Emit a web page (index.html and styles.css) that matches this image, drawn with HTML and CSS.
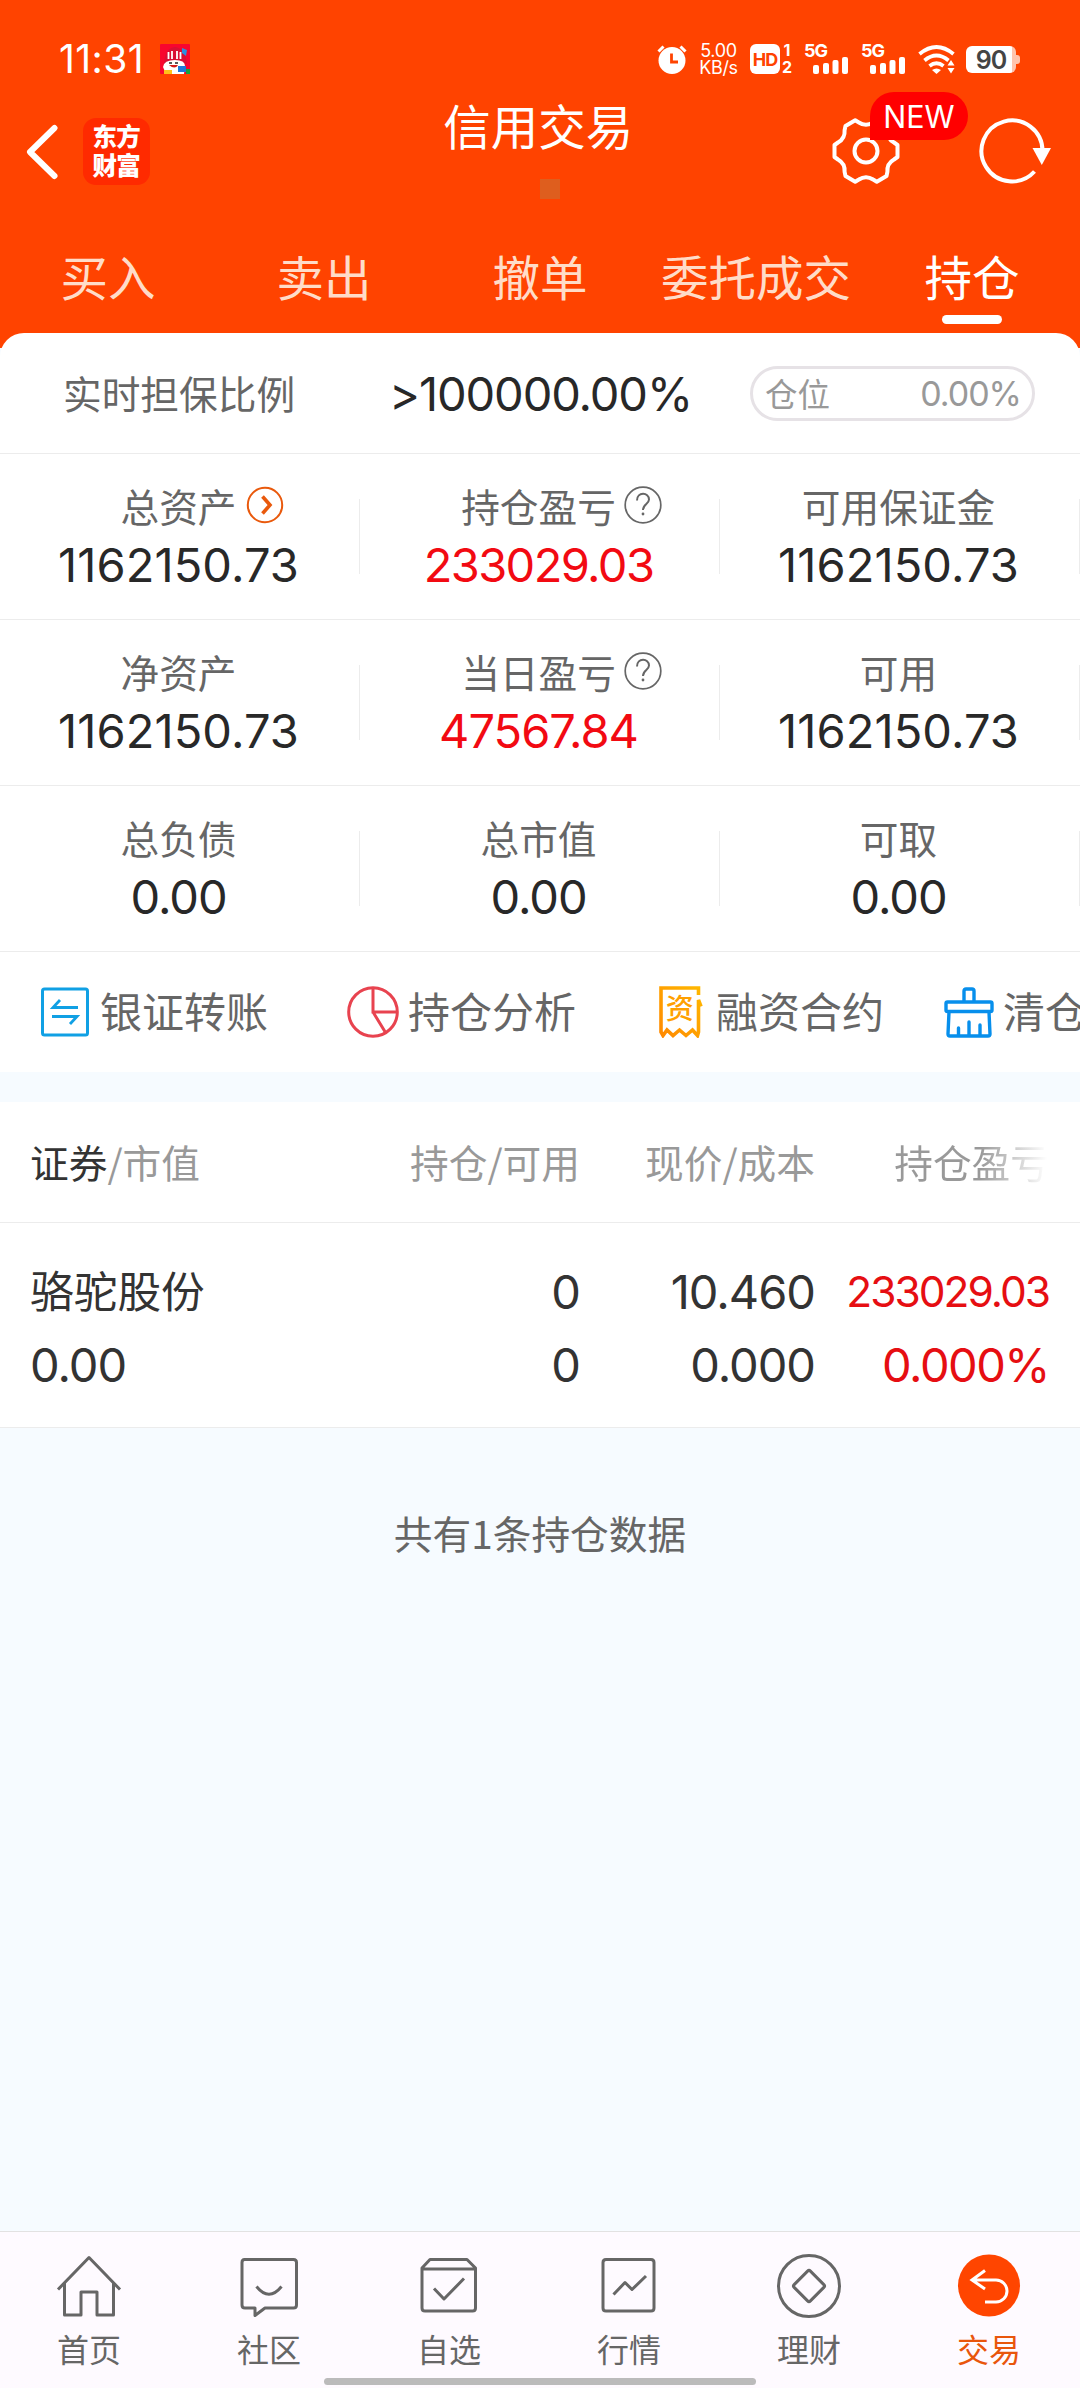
FILE: index.html
```html
<!DOCTYPE html>
<html lang="zh-CN">
<head>
<meta charset="utf-8">
<title>信用交易</title>
<link rel="stylesheet" href="styles.css">
</head>
<body>
<div class="app">
  <header class="header">
    <div class="status">
      <span class="clock num">11:31</span>
      <svg class="promo" width="30" height="30" viewBox="0 0 30 30">
        <rect width="30" height="30" rx="1" fill="#f8062e"/>
        <path d="M4 20Q5 4 15 3Q25 4 27 20Z" fill="#d90f34"/>
        <path d="M22 4l5 2-1 6-4-3z" fill="#2b8fe0"/>
        <path d="M8.500 8v7M12 7v8M17 7v8M20.500 8v7" stroke="#fff" stroke-width="1.800"/>
        <path d="M3 23Q4 16 15 16Q25 16 25 22L24 30H6Z" fill="#fff"/>
        <path d="M9 19h3M15 19h3" stroke="#222" stroke-width="1.500"/>
        <path d="M9 21h9q-3 5-9 0z" fill="#d31a1a"/>
        <rect x="4" y="26" width="8" height="4" fill="#ffc21a"/>
        <rect x="18" y="22" width="8" height="6" fill="#1f78d8"/>
        <rect x="26" y="25" width="4" height="5" fill="#18a03c"/>
      </svg>
      <div class="status-right">
        <svg class="alarm" width="30" height="30" viewBox="0 0 30 30">
          <circle cx="15" cy="16.500" r="13.500" fill="#fff"/>
          <path d="M1.500 7.500L6.500 2.500M28.500 7.500L23.500 2.500" stroke="#fff" stroke-width="3"/>
          <path d="M14.500 9.500v8.500h6.500" fill="none" stroke="#ff4300" stroke-width="2.800"/>
        </svg>
        <div class="speed num"><span>5.00</span><span>KB/s</span></div>
        <div class="hd num">HD</div>
        <div class="sims num"><span>1</span><span>2</span></div>
        <div class="signal num"><span>5G</span>
          <svg width="36" height="17" viewBox="0 0 36 17" fill="#fff"><rect x="0" y="8" width="6" height="9" rx="2"/><rect x="10" y="6" width="6" height="11" rx="2"/><rect x="19.500" y="3" width="6" height="14" rx="2"/><rect x="29" y="0" width="6" height="17" rx="2"/></svg>
        </div>
        <div class="signal num"><span>5G</span>
          <svg width="36" height="17" viewBox="0 0 36 17" fill="#fff"><rect x="0" y="8" width="6" height="9" rx="2"/><rect x="10" y="6" width="6" height="11" rx="2"/><rect x="19.500" y="3" width="6" height="14" rx="2"/><rect x="29" y="0" width="6" height="17" rx="2"/></svg>
        </div>
        <svg class="wifi" width="38" height="30" viewBox="0 0 38 30" fill="none" stroke="#fff" stroke-width="3.800">
          <path d="M1.500 10Q18.500-4 35.500 10M6.500 16.500Q18.500 6.500 30.500 16.500M11.500 22Q18.500 16.500 25.500 22"/>
          <path d="M14 26Q18.500 23 23 26L18.500 30Z" fill="#fff" stroke="none"/>
          <path d="M33 16l3.500 5.500h-7zM33 29.500l3.500-5.500h-7z" fill="#fff" stroke="none"/>
        </svg>
        <div class="battery num"><span class="level">90</span><i class="nub"></i></div>
      </div>
    </div>
    <div class="titlebar">
      <svg class="back" width="34" height="56" viewBox="0 0 34 56" fill="none" stroke="#fff" stroke-width="6" stroke-linecap="round" stroke-linejoin="round"><path d="M29.500 4L5 28L29.500 52"/></svg>
      <div class="logo">东方<br>财富</div>
      <div class="title">信用交易<i class="marker"></i></div>
      <div class="settings">
        <svg width="70" height="70" viewBox="-35 -35 70 70" fill="none" stroke="#fff" stroke-width="4" stroke-linejoin="round">
          <path d="M28-8.500L31.500-6V6L28 8.500A13 13 0 0 0 21.400 20.900L20.500 25L10.800 30.700L7.100 28.500A13 13 0 0 0-7.100 28.500L-10.800 30.700L-20.500 25L-21.400 20.900A13 13 0 0 0-28 8.500L-31.500 6V-6L-28-8.500A13 13 0 0 0-21.400-20.900L-20.500-25L-10.800-30.700L-7.100-28.500A13 13 0 0 0 7.100-28.500L10.800-30.700L20.500-25L21.400-20.900A13 13 0 0 0 28-8.500Z"/>
          <circle r="11.500"/>
        </svg>
        <span class="badge num">NEW</span>
      </div>
      <svg class="refresh" width="74" height="70" viewBox="-35 -35 74 70" fill="none" stroke="#fff" stroke-width="4">
        <path d="M22.500 20.500A30.500 30.500 0 1 1 30.500 0"/>
        <path d="M20.500-3H39L29.800 14Z" fill="#fff" stroke="none"/>
      </svg>
    </div>
    <nav class="tabs">
      <span>买入</span><span>卖出</span><span>撤单</span><span>委托成交</span><span class="active">持仓</span>
    </nav>
  </header>

  <section class="card">
    <div class="ratio">
      <span class="ratio-label">实时担保比例</span>
      <span class="ratio-value num">&gt;100000.00%</span>
      <div class="pill"><span class="pill-label">仓位</span><span class="num">0.00%</span></div>
    </div>
    <div class="stats">
      <div class="stat"><div class="label">总资产<svg class="go" width="38" height="38" viewBox="0 0 38 38" fill="none" stroke="#e9590c"><circle cx="19" cy="19" r="17.200" stroke-width="2"/><path d="M16.500 10.500L24 19L16.500 27.500" stroke-width="3.600"/></svg></div><div class="value wide num">1162150.73</div></div>
      <div class="stat"><div class="label">持仓盈亏<svg class="help" width="40" height="40" viewBox="0 0 40 40" fill="none" stroke="#666"><circle cx="20" cy="20" r="17.800" stroke-width="1.700"/><path d="M14 15.500C14 6.500 26 7 26 14.500C26 19 20 19 20 25" stroke-width="2"/><circle cx="20" cy="29" r="1.400" fill="#666" stroke="none"/></svg></div><div class="value tight num red">233029.03</div></div>
      <div class="stat"><div class="label">可用保证金</div><div class="value wide num">1162150.73</div></div>
    </div>
    <div class="stats">
      <div class="stat"><div class="label">净资产</div><div class="value wide num">1162150.73</div></div>
      <div class="stat"><div class="label">当日盈亏<svg class="help" width="40" height="40" viewBox="0 0 40 40" fill="none" stroke="#666"><circle cx="20" cy="20" r="17.800" stroke-width="1.700"/><path d="M14 15.500C14 6.500 26 7 26 14.500C26 19 20 19 20 25" stroke-width="2"/><circle cx="20" cy="29" r="1.400" fill="#666" stroke="none"/></svg></div><div class="value num red">47567.84</div></div>
      <div class="stat"><div class="label">可用</div><div class="value wide num">1162150.73</div></div>
    </div>
    <div class="stats">
      <div class="stat"><div class="label">总负债</div><div class="value num">0.00</div></div>
      <div class="stat"><div class="label">总市值</div><div class="value num">0.00</div></div>
      <div class="stat"><div class="label">可取</div><div class="value num">0.00</div></div>
    </div>
    <div class="tools">
      <div class="tool transfer">
        <svg width="48" height="50" viewBox="0 0 48 50" fill="none" stroke="#10a0e4"><rect x="1.500" y="2" width="45" height="46" rx="2" stroke-width="3"/><path d="M37 20.500H12L19 13M11 29.500H36L29 37" stroke-width="2.800"/></svg>
        <span>银证转账</span>
      </div>
      <div class="tool analysis">
        <svg width="52" height="52" viewBox="0 0 52 52" fill="none" stroke="#e8434f" stroke-width="3"><circle cx="26" cy="26" r="24.300"/><path d="M26 2V26H50M26 26L38.500 46.500"/></svg>
        <span>持仓分析</span>
      </div>
      <div class="tool contract">
        <svg width="44" height="52" viewBox="0 0 44 52"><defs><linearGradient id="gold" x1="0" y1="1" x2="1" y2="0"><stop offset="0" stop-color="#ff8a00"/><stop offset="1" stop-color="#ffb800"/></linearGradient></defs>
          <path d="M39.500 9V2H2V46L4 49.500L8 44L14 49.500L20.500 44L27 49.500L33.500 44L38.500 49.500L39.500 46V14L42 20.500" fill="none" stroke="url(#gold)" stroke-width="3.600"/>
          <text x="20.700" y="33" text-anchor="middle" class="tool-glyph">资</text></svg>
        <span>融资合约</span>
      </div>
      <div class="tool clear">
        <svg width="50" height="51" viewBox="0 0 50 51" fill="none" stroke="#078fec" stroke-width="3.400" stroke-linejoin="round" stroke-linecap="round"><path d="M20 14V4Q20 2 22 2H28Q30 2 30 4V14M3.500 15H46.500Q48 15 48 16.500V23Q48 24.500 46.500 24.500H3.500Q2 24.500 2 23V16.500Q2 15 3.500 15ZM5 25L4 47Q4 49 6 49H44Q46 49 46 47L45 25M14.500 49V41M25 49V35M36 49V38"/></svg>
        <span>清仓</span>
      </div>
    </div>
  </section>

  <section class="holdings">
    <div class="row head">
      <span class="c1"><b>证券</b>/市值</span><span>持仓/可用</span><span>现价/成本</span><span class="fade">持仓盈亏</span>
    </div>
    <div class="row body">
      <div class="c1"><span class="name">骆驼股份</span><span class="num">0.00</span></div>
      <div class="num"><span>0</span><span>0</span></div>
      <div class="num"><span>10.460</span><span>0.000</span></div>
      <div class="num pl"><span class="small">233029.03</span><span class="rate">0.000%</span></div>
    </div>
  </section>
  <p class="summary">共有1条持仓数据</p>

  <footer class="tabbar">
    <div class="item">
      <svg width="70" height="70" viewBox="0 0 70 70"><path d="M4 40.500L35 8.500L66 40.500M10.500 34V66H27V43H43V66H59.500V34"/></svg>
      <span>首页</span>
    </div>
    <div class="item">
      <svg width="70" height="70" viewBox="0 0 70 70"><path d="M10.500 10.500H59.500Q62.500 10.500 62.500 13.500V56Q62.500 59 59.500 59H31L21 66.500V59H11Q8 59 8 56V13.500Q8 10.500 10.500 10.500ZM22.500 37.500Q35 53 47.500 37.500"/></svg>
      <span>社区</span>
    </div>
    <div class="item">
      <svg width="70" height="70" viewBox="0 0 70 70"><path d="M8 19L16 10.500H53L61.500 19V59Q61.500 62 58.500 62H11Q8 62 8 59ZM8 20H61.500M20 39.500L30 50L50 29.500"/></svg>
      <span>自选</span>
    </div>
    <div class="item">
      <svg width="70" height="70" viewBox="0 0 70 70"><path d="M12 10.500H57Q60 10.500 60 13.500V59Q60 62 57 62H12Q9 62 9 59V13.500Q9 10.500 12 10.500ZM19.500 45.500L31 33.500L38 40.500L52 27"/></svg>
      <span>行情</span>
    </div>
    <div class="item">
      <svg width="70" height="70" viewBox="0 0 70 70"><circle cx="35" cy="37" r="30.500"/><rect x="23.500" y="25.500" width="23" height="23" rx="2" transform="rotate(45 35 37)"/></svg>
      <span>理财</span>
    </div>
    <div class="item current">
      <svg width="70" height="70" viewBox="0 0 70 70"><circle class="disc" cx="35" cy="36.500" r="31"/><path d="M31 21.500L18 31L31 40M18 31H42A11 11 0 0 1 42 53H31"/></svg>
      <span>交易</span>
    </div>
    <i class="home-indicator"></i>
  </footer>
</div>
</body>
</html>
```
FILE: styles.css
```css
* { box-sizing: border-box; }
body {
  margin: 0;
  background: #f6fbff;
  color: #666;
  font-family: "Noto Sans CJK SC", sans-serif;
}
svg { display: block; flex: none; }
i { font-style: normal; }
.num { font-family: Inter, "Noto Sans CJK SC", sans-serif; }
.app {
  width: 1080px;
  height: 2388px;
  overflow: hidden;
  display: flex;
  flex-direction: column;
}

/* header */
.header { height: 348px; background: #ff4300; color: #fff; flex: none; }
.status { display: flex; align-items: center; height: 88px; padding: 30px 60px 0 59px; }
.clock { width: 101px; font-size: 39px; line-height: 58px; letter-spacing: .4px; white-space: nowrap; }
.status-right { display: flex; align-items: center; margin-left: auto; height: 30px; }
.alarm { margin-right: 12px; }
.speed { width: 39px; display: flex; flex-direction: column; align-items: center; font-size: 18px; line-height: 17px; margin-right: 12px; letter-spacing: -.3px; }
.hd { width: 30px; height: 30px; border-radius: 6px; background: #fff; color: #ff4300; font-size: 18px; font-weight: 700; line-height: 31px; text-align: center; letter-spacing: -1px; }
.sims { width: 12px; margin: 0 11px 0 1px; display: flex; flex-direction: column; align-items: center; font-size: 16px; font-weight: 700; line-height: 17px; }
.signal { width: 45px; height: 30px; margin-right: 12px; display: flex; flex-direction: column; font-size: 18px; font-weight: 700; line-height: 14px; letter-spacing: -1px; }
.signal span { height: 13px; }
.signal svg { align-self: flex-end; }
.battery { position: relative; margin: 0 4px 0 10px; width: 50px; height: 27px; border-radius: 6px; background: linear-gradient(90deg, #fff 46px, #ffc4ae 46px); color: #444; font-size: 25px; font-weight: 600; line-height: 28px; letter-spacing: -1px; text-align: center; }
.nub { position: absolute; left: 50px; top: 9px; width: 4px; height: 9px; border-radius: 0 3px 3px 0; background: #ffc4ae; }

.titlebar { display: flex; align-items: flex-start; height: 130px; padding: 0 29px 0 25px; }
.back { margin-top: 36px; }
.logo { margin: 30px 0 0 24px; width: 67px; height: 67px; border-radius: 13px; background: #ff2a00; padding-top: 3px; font-size: 24.500px; font-weight: 900; line-height: 29px; letter-spacing: -.6px; text-align: center; }
.title { width: 192px; margin: 3px 0 0 293px; font-size: 47.500px; line-height: 68px; text-align: center; white-space: nowrap; display: flex; flex-direction: column; align-items: center; }
.marker { width: 20px; height: 20px; margin: 20px 0 0 24px; background: #de5e1e; }
.settings { position: relative; margin: 28px 0 0 197px; }
.badge { position: absolute; left: 39px; top: -24px; width: 98px; height: 48px; border-radius: 24px 24px 24px 0; background: #f00; font-size: 30.500px; line-height: 49px; text-align: center; }
.refresh { margin: 28px 0 0 76px; }

.tabs { display: grid; grid-template-columns: repeat(5, 216px); height: 115px; font-size: 47.500px; line-height: 115px; color: #ffdcc8; text-align: center; }
.tabs .active { position: relative; color: #fff; }
.tabs .active::after { content: ""; position: absolute; left: 78px; top: 97px; width: 60px; height: 9px; border-radius: 5px; background: #fff; }

/* account card */
.card { position: relative; margin-top: -15px; flex: none; background: #fff; border-radius: 24px 24px 0 0; }
.ratio { display: flex; align-items: center; height: 120px; padding: 0 45px 0 63px; line-height: 56px; }
.ratio-label { width: 326px; font-size: 38.700px; padding-bottom: 2px; }
.ratio-value { color: #282828; font-size: 47px; letter-spacing: -1.1px; white-space: nowrap; padding-top: 2px; }
.pill { margin-left: auto; margin-top: 1px; width: 285px; height: 55px; border: 3px solid #e6e2e6; border-radius: 28px; display: flex; align-items: center; justify-content: space-between; padding: 0 11px 0 12px; color: #999; font-size: 32.500px; line-height: 49px; }
.pill-label { padding-bottom: 3px; }
.pill .num { font-size: 34px; letter-spacing: -1px; }
.stats { display: grid; grid-template-columns: repeat(3, 360px); height: 166px; border-top: 1px solid #ececec; }
.stat { display: flex; flex-direction: column; align-items: center; padding: 23px 3px 0 0; background: linear-gradient(#ececec, #ececec) 359px 45px / 1px 75px no-repeat; }
.label { position: relative; font-size: 38.700px; line-height: 56px; }
.label svg { position: absolute; left: 100%; top: 9px; margin-left: 9px; }
.label .help { top: 8px; margin-left: 7px; }
.value { color: #282828; font-size: 47px; line-height: 60px; letter-spacing: -1px; margin-top: 2px; }
.value.wide { letter-spacing: .1px; }
.value.tight { letter-spacing: -1.6px; }
.value.red { color: #f20a12; }
.tools { display: flex; align-items: center; height: 121px; padding-left: 41px; border-top: 1px solid #ececec; overflow: hidden; white-space: nowrap; font-size: 42px; line-height: 60px; }
.tool { display: flex; align-items: center; gap: 11px; flex: none; }
.tool span { padding-bottom: 5px; }
.analysis { margin-left: 79px; gap: 9px; }
.contract { margin-left: 83px; gap: 13px; }
.clear { margin-left: 60px; gap: 9px; }
.tool-glyph { font-size: 28px; font-weight: 500; fill: #ffa000; }

/* holdings */
.holdings { margin-top: 30px; flex: none; background: #fff; }
.row { display: grid; grid-template-columns: 315px 235px 235px 234px; padding-left: 30px; text-align: right; }
.row .c1 { text-align: left; }
.head { height: 121px; border-bottom: 1px solid #ececec; font-size: 38.700px; line-height: 118px; color: #999; white-space: nowrap; }
.head b { color: #333; font-weight: 400; }
.fade { background: linear-gradient(90deg, #999 165px, #fff 232px); -webkit-background-clip: text; background-clip: text; color: transparent; }
.body { height: 205px; border-bottom: 1px solid #ececec; padding-top: 32px; color: #333; font-size: 47px; letter-spacing: -1px; }
.body > div { display: flex; flex-direction: column; }
.body span { height: 73px; line-height: 73px; }
.body .name { font-size: 43.700px; line-height: 69px; letter-spacing: 0; }
.body .pl { color: #e60e12; }
.body .small { font-size: 42.500px; letter-spacing: -2px; }
.body .rate { letter-spacing: -1.5px; }
.summary { margin: 76px 0 0; text-align: center; font-size: 38.700px; line-height: 56px; }

/* bottom bar */
.tabbar { position: relative; margin-top: auto; flex: none; height: 157px; border-top: 1px solid #e2e2e2; background: #fefaff; display: grid; grid-template-columns: repeat(6, 180px); }
.item { display: flex; flex-direction: column; align-items: center; padding: 17px 2px 0 0; font-size: 32px; line-height: 46px; }
.item svg { fill: none; stroke: #666; stroke-width: 3; stroke-linejoin: round; margin-bottom: 6px; }
.current { color: #e9560c; }
.current svg { stroke: #fff; stroke-linejoin: miter; }
.current .disc { fill: #ff4500; stroke: none; }
.home-indicator { position: absolute; left: 324px; bottom: 3px; width: 432px; height: 7px; border-radius: 4px; background: #bbb; }
```
